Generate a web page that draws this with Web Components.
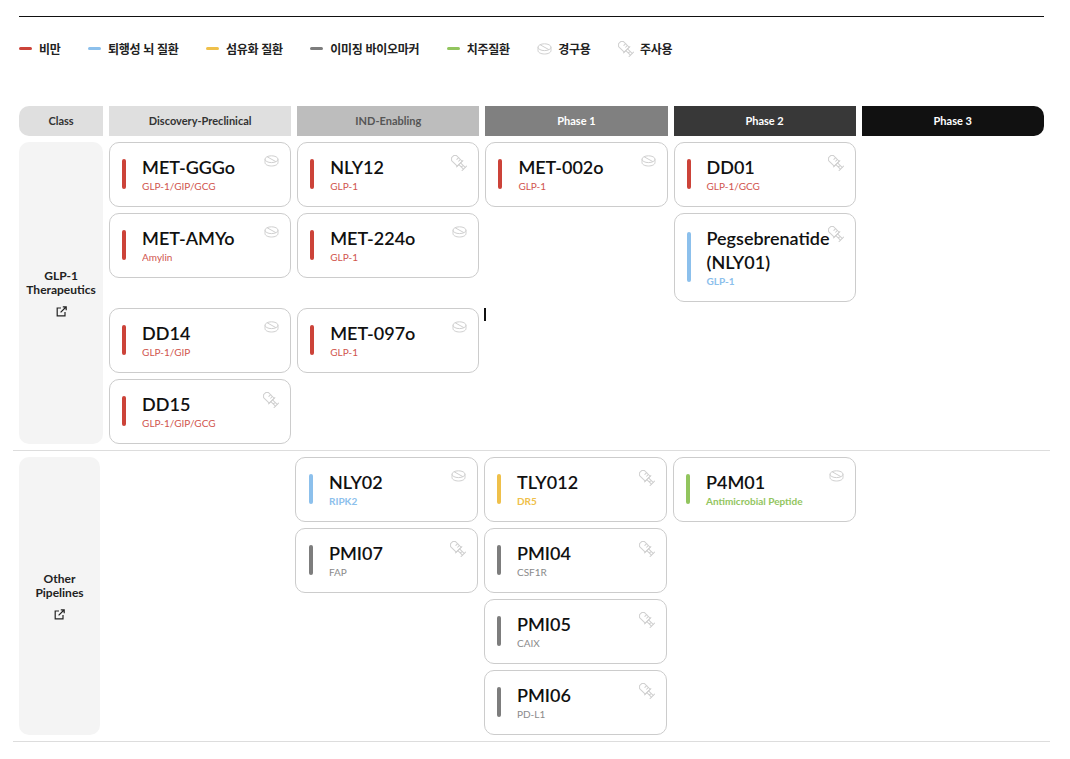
<!DOCTYPE html>
<html lang="ko">
<head>
<meta charset="utf-8">
<title>Pipeline</title>
<style>
  html, body { margin: 0; background: #fff; }
  body { font-family: "Lato", "Noto Sans CJK KR", sans-serif; color: #111; }
  .caret { display: block; width: 2px; height: 13px; background: #111; margin-left: -1px; }
</style>
</head>
<body>
<pipeline-page>
  <pipeline-legend>
    <legend-item color="#cc4339">비만</legend-item>
    <legend-item color="#8cc0ec">퇴행성 뇌 질환</legend-item>
    <legend-item color="#efc04a">섬유화 질환</legend-item>
    <legend-item color="#7d7d7d">이미징 바이오마커</legend-item>
    <legend-item color="#92c55e">치주질환</legend-item>
    <legend-item icon="pill">경구용</legend-item>
    <legend-item icon="syringe">주사용</legend-item>
  </pipeline-legend>

  <pipeline-header>
    <header-cell bg="#dfdfdf" fg="#333" class="first">Class</header-cell>
    <header-cell bg="#dfdfdf" fg="#333">Discovery-Preclinical</header-cell>
    <header-cell bg="#bdbdbd" fg="#555">IND-Enabling</header-cell>
    <header-cell bg="#808080" fg="#fff">Phase 1</header-cell>
    <header-cell bg="#383838" fg="#fff">Phase 2</header-cell>
    <header-cell bg="#111111" fg="#fff" class="last">Phase 3</header-cell>
  </pipeline-header>

  <pipeline-section style="--class-w:84.1px;--col-w:182.15px">
    <class-cell style="grid-row: span 2">GLP-1<br>Therapeutics</class-cell>

    <stage-cell col="2">
      <drug-card color="#cc4339" icon="pill">MET-GGGo<span slot="sub">GLP-1/GIP/GCG</span></drug-card>
      <drug-card color="#cc4339" icon="pill">MET-AMYo<span slot="sub">Amylin</span></drug-card>
    </stage-cell>
    <stage-cell col="3">
      <drug-card color="#cc4339" icon="syringe">NLY12<span slot="sub">GLP-1</span></drug-card>
      <drug-card color="#cc4339" icon="pill">MET-224o<span slot="sub">GLP-1</span></drug-card>
    </stage-cell>
    <stage-cell col="4">
      <drug-card color="#cc4339" icon="pill">MET-002o<span slot="sub">GLP-1</span></drug-card>
    </stage-cell>
    <stage-cell col="5">
      <drug-card color="#cc4339" icon="syringe">DD01<span slot="sub">GLP-1/GCG</span></drug-card>
      <drug-card color="#8cc0ec" icon="syringe" strong>Pegsebrenatide (NLY01)<span slot="sub">GLP-1</span></drug-card>
    </stage-cell>

    <stage-cell col="2">
      <drug-card color="#cc4339" icon="pill">DD14<span slot="sub">GLP-1/GIP</span></drug-card>
      <drug-card color="#cc4339" icon="syringe">DD15<span slot="sub">GLP-1/GIP/GCG</span></drug-card>
    </stage-cell>
    <stage-cell col="3">
      <drug-card color="#cc4339" icon="pill">MET-097o<span slot="sub">GLP-1</span></drug-card>
    </stage-cell>
    <stage-cell col="4"><span class="caret"></span></stage-cell>
  </pipeline-section>

  <pipeline-section style="--class-w:81px;--col-w:183px">
    <class-cell>Other<br>Pipelines</class-cell>
    <stage-cell col="3" style="--card-pad:13px">
      <drug-card color="#8cc0ec" icon="pill" strong>NLY02<span slot="sub">RIPK2</span></drug-card>
      <drug-card color="#7d7d7d" icon="syringe">PMI07<span slot="sub">FAP</span></drug-card>
    </stage-cell>
    <stage-cell col="4">
      <drug-card color="#efc04a" icon="syringe" strong>TLY012<span slot="sub">DR5</span></drug-card>
      <drug-card color="#7d7d7d" icon="syringe">PMI04<span slot="sub">CSF1R</span></drug-card>
      <drug-card color="#7d7d7d" icon="syringe">PMI05<span slot="sub">CAIX</span></drug-card>
      <drug-card color="#7d7d7d" icon="syringe">PMI06<span slot="sub">PD-L1</span></drug-card>
    </stage-cell>
    <stage-cell col="5">
      <drug-card color="#92c55e" icon="pill" strong>P4M01<span slot="sub">Antimicrobial Peptide</span></drug-card>
    </stage-cell>
  </pipeline-section>
</pipeline-page>

<script>
// shared icons
const ICONS = {
  pill: `<svg width="15" height="12" viewBox="0 0 15 12" fill="none" stroke="#d0d0d0" stroke-width="1">
    <ellipse cx="7.5" cy="4.2" rx="6.5" ry="3.4"/>
    <path d="M1 4.2v3.4c0 1.9 2.9 3.4 6.5 3.4s6.5-1.5 6.5-3.4V4.2"/>
    <path d="M3.2 1.8l8.6 4.8"/>
  </svg>`,
  syringe: `<svg width="16" height="16" viewBox="-8 -8 16 16" fill="none" stroke="#d0d0d0" stroke-width="1" stroke-linejoin="round" stroke-linecap="round">
    <g transform="rotate(45) translate(1.5 0)">
      <path d="M-10.5 -1.5 L-8.5 -3.5 H-0.5 V3.5 H-8.5 L-10.5 1.5 Z"/>
      <path d="M-5.5 -3.5 V-1M-3 -3.5 V-1"/>
      <path d="M-0.5 -1.2 H6 M3 -1.2 V1.2 M-0.5 1.2 H6"/>
      <path d="M-0.5 -4.5 V4.5"/>
      <path d="M6 -3.2 V3.2"/>
    </g>
  </svg>`,
  link: `<svg width="11" height="11" viewBox="0 0 11 11" fill="none" stroke="#222" stroke-width="1.2">
    <path d="M5 2H1.2v7.8H9V6"/>
    <path d="M4.6 6.4L10 1M6.8 .8h3.4v3.4"/>
  </svg>`
};

// Wraps the whole page
class PipelinePage extends HTMLElement {
  constructor() {
    super();
    this.attachShadow({ mode: 'open' });
    this.shadowRoot.innerHTML = `
      <style>
        :host { display: block; padding: 16px 0 0 13px; width: 1037px; }
        .rule { height: 1px; background: #111; margin: 0 6px 0 6px; }
      </style>
      <div class="rule"></div>
      <slot></slot>
    `;
  }
}

class PipelineLegend extends HTMLElement {
  constructor() {
    super();
    this.attachShadow({ mode: 'open' });
    this.shadowRoot.innerHTML = `
      <style>
        :host { display: flex; align-items: center; gap: 27.5px; height: 17px; padding: 23px 6px 49px; }
      </style>
      <slot></slot>
    `;
  }
}

class LegendItem extends HTMLElement {
  constructor() {
    super();
    this.attachShadow({ mode: 'open' });
    const icon = this.getAttribute('icon');
    const color = this.getAttribute('color');
    const mark = icon ? ICONS[icon] : `<span class="dash" style="background:${color}"></span>`;
    this.shadowRoot.innerHTML = `
      <style>
        :host { display: flex; align-items: center; gap: ${icon ? 6 : 7}px; font: 700 12px/17px "Noto Sans CJK KR", sans-serif;
          letter-spacing: -0.3px; color: #222; white-space: nowrap; }
        .dash { width: 13px; height: 3px; border-radius: 2px; }
      </style>
      ${mark}<slot></slot>
    `;
  }
}

class PipelineHeader extends HTMLElement {
  constructor() {
    super();
    this.attachShadow({ mode: 'open' });
    this.shadowRoot.innerHTML = `
      <style>
        :host { display: grid; grid-template-columns: 84.1px repeat(5, 182.15px); gap: 6px; padding: 0 6px 6px; }
      </style>
      <slot></slot>
    `;
  }
}

class HeaderCell extends HTMLElement {
  constructor() {
    super();
    this.attachShadow({ mode: 'open' });
    const bg = this.getAttribute('bg');
    const fg = this.getAttribute('fg');
    this.shadowRoot.innerHTML = `
      <style>
        :host { display: flex; align-items: center; justify-content: center; height: 30px; padding-bottom: 1px; box-sizing: border-box;
          background: ${bg}; color: ${fg}; font-size: 11px; font-weight: 700; }
        :host(.first) { border-radius: 10px 0 0 10px; }
        :host(.last) { border-radius: 0 10px 10px 0; }
      </style>
      <slot></slot>
    `;
  }
}

class PipelineSection extends HTMLElement {
  constructor() {
    super();
    this.attachShadow({ mode: 'open' });
    this.shadowRoot.innerHTML = `
      <style>
        :host { display: block; padding: 0 6px 6px; border-bottom: 1px solid #ddd; margin-bottom: 6px; }
        .grid { display: grid; grid-template-columns: var(--class-w) repeat(5, var(--col-w)); gap: 6px; align-items: start; }
      </style>
      <div class="grid"><slot></slot></div>
    `;
  }
}

class ClassCell extends HTMLElement {
  constructor() {
    super();
    this.attachShadow({ mode: 'open' });
    this.shadowRoot.innerHTML = `
      <style>
        :host { display: flex; flex-direction: column; align-items: center; justify-content: center; gap: 9px;
          align-self: stretch; background: #f4f4f4; border-radius: 10px; text-align: center;
          font-size: 12px; font-weight: 700; line-height: 14px; color: #222; }
        svg { display: block; }
      </style>
      <div><slot></slot></div>
      ${ICONS.link}
    `;
  }
}

class StageCell extends HTMLElement {
  constructor() {
    super();
    this.attachShadow({ mode: 'open' });
    this.shadowRoot.innerHTML = `
      <style>
        :host { display: flex; flex-direction: column; gap: 6px; grid-column: ${this.getAttribute('col')}; }
      </style>
      <slot></slot>
    `;
  }
}

class DrugCard extends HTMLElement {
  constructor() {
    super();
    this.attachShadow({ mode: 'open' });
    const strong = this.hasAttribute('strong');
    this.shadowRoot.innerHTML = `
      <style>
        :host { display: flex; position: relative; box-sizing: border-box;
          padding: 12px 12px 13px var(--card-pad, 12px);
          border: 1px solid #cccccc; border-radius: 10px; background: #fff; --accent: ${this.getAttribute('color')}; }
        .bar-box { display: flex; align-items: center; width: 4px; flex: none; margin-right: 16px; }
        .bar { width: 4px; height: 80%; border-radius: 2px; background: var(--accent); }
        .text { min-width: 0; }
        .name { font-size: 18px; line-height: 24px; font-weight: 600; color: #111; }
        .sub { font-size: 10px; line-height: 14px; font-weight: ${strong ? 700 : 400}; color: var(--accent); opacity: ${strong ? 1 : 0.9}; }
        .icon { position: absolute; top: 12px; right: 11px; line-height: 0; }
      </style>
      <div class="bar-box"><div class="bar"></div></div>
      <div class="text">
        <div class="name"><slot></slot></div>
        <div class="sub"><slot name="sub"></slot></div>
      </div>
      <div class="icon">${ICONS[this.getAttribute('icon')]}</div>
    `;
  }
}

customElements.define('pipeline-page', PipelinePage);
customElements.define('pipeline-legend', PipelineLegend);
customElements.define('legend-item', LegendItem);
customElements.define('pipeline-header', PipelineHeader);
customElements.define('header-cell', HeaderCell);
customElements.define('pipeline-section', PipelineSection);
customElements.define('class-cell', ClassCell);
customElements.define('stage-cell', StageCell);
customElements.define('drug-card', DrugCard);
</script>
</body>
</html>
